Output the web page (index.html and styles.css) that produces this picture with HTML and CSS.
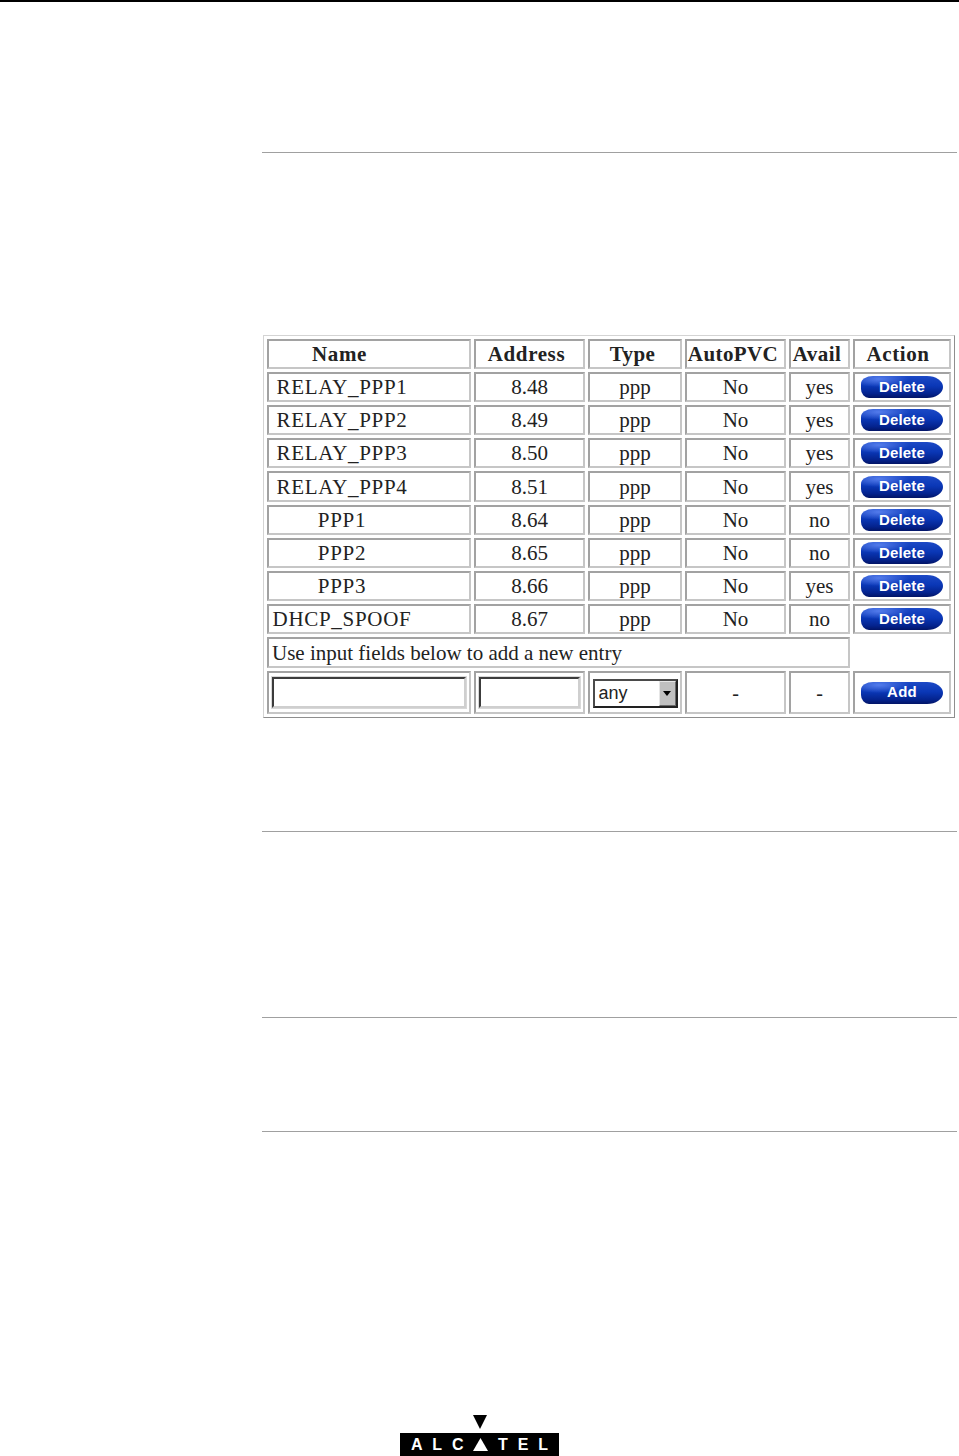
FILE: index.html
```html
<!DOCTYPE html>
<html lang="en">
<head>
<meta charset="utf-8">
<title>PVC table</title>
<link rel="stylesheet" href="styles.css">
</head>
<body>
<div class="page">
  <div class="top-rule"></div>
  <main class="content">
    <div class="rule rule-a"></div>
    <form class="panel">
      <table class="grid">
        <colgroup>
          <col class="c-name"><col class="c-addr"><col class="c-type"><col class="c-auto"><col class="c-avail"><col class="c-action">
        </colgroup>
        <thead>
          <tr><th class="h-name">Name</th><th class="h-addr">Address</th><th class="h-mid">Type</th><th class="h-mid">AutoPVC</th><th class="h-mid">Avail</th><th class="h-action">Action</th></tr>
        </thead>
        <tbody>
          <tr><td class="name">RELAY_PPP1</td><td>8.48</td><td>ppp</td><td>No</td><td>yes</td><td><button type="button" class="pill">Delete</button></td></tr>
          <tr><td class="name">RELAY_PPP2</td><td>8.49</td><td>ppp</td><td>No</td><td>yes</td><td><button type="button" class="pill">Delete</button></td></tr>
          <tr><td class="name">RELAY_PPP3</td><td>8.50</td><td>ppp</td><td>No</td><td>yes</td><td><button type="button" class="pill">Delete</button></td></tr>
          <tr class="tall"><td class="name">RELAY_PPP4</td><td>8.51</td><td>ppp</td><td>No</td><td>yes</td><td><button type="button" class="pill">Delete</button></td></tr>
          <tr><td class="name">PPP1</td><td>8.64</td><td>ppp</td><td>No</td><td>no</td><td><button type="button" class="pill">Delete</button></td></tr>
          <tr><td class="name">PPP2</td><td>8.65</td><td>ppp</td><td>No</td><td>no</td><td><button type="button" class="pill">Delete</button></td></tr>
          <tr><td class="name">PPP3</td><td>8.66</td><td>ppp</td><td>No</td><td>yes</td><td><button type="button" class="pill">Delete</button></td></tr>
          <tr><td class="name">DHCP_SPOOF</td><td>8.67</td><td>ppp</td><td>No</td><td>no</td><td><button type="button" class="pill">Delete</button></td></tr>
          <tr><td class="hint" colspan="5">Use input fields below to add a new entry</td><td class="blank"></td></tr>
          <tr class="add-row">
            <td><input class="field" type="text" aria-label="Name"></td>
            <td><input class="field" type="text" aria-label="Address"></td>
            <td><div class="select"><span class="select-value">any</span><span class="select-btn"><svg width="8" height="5" viewBox="0 0 8 5"><path d="M0 0h8L4 5z" fill="#000"/></svg></span></div></td>
            <td class="dash">-</td>
            <td class="dash">-</td>
            <td><button type="button" class="pill">Add</button></td>
          </tr>
        </tbody>
      </table>
    </form>
    <div class="rule rule-b"></div>
    <div class="rule rule-c"></div>
    <div class="rule rule-d"></div>
  </main>
  <footer class="logo">
    <svg class="logo-mark" width="14" height="14" viewBox="0 0 14 14"><path d="M0 0h14L7 14z" fill="#000"/></svg>
    <div class="logo-bar">
      <span>A</span><span>L</span><span>C</span>
      <svg class="logo-tri" width="15" height="13" viewBox="0 0 15 13"><path d="M7.500 0L15 13H0z" fill="#fff"/></svg>
      <span>T</span><span>E</span><span>L</span>
    </div>
  </footer>
</div>
</body>
</html>
```
FILE: styles.css
```css
html, body {
  margin: 0;
  padding: 0;
  background: #fff;
}
.page {
  display: flex;
  flex-direction: column;
  width: 959px;
  height: 1456px;
  overflow: hidden;
  font-family: "Liberation Serif", "Times New Roman", serif;
  color: #222;
}
.top-rule {
  height: 2px;
  background: #000;
  flex: none;
}
.content {
  margin-left: 262px;
  width: 695px;
  flex: none;
}
.rule {
  height: 1px;
  background: #a0a0a0;
}
.rule-a { margin-top: 150px; }
.rule-b { margin-top: 113px; }
.rule-c { margin-top: 185px; }
.rule-d { margin-top: 113px; }
.panel {
  margin: 182px 0 0 1px;
}
.grid {
  table-layout: fixed;
  width: 692px;
  border-collapse: separate;
  border-spacing: 3px;
  border: 1px solid;
  border-color: #d4d4d4 #8e8e8e #8e8e8e #d4d4d4;
  font-size: 21px;
}
.c-name { width: 204px; }
.c-addr { width: 111px; }
.c-type { width: 94px; }
.c-auto { width: 101px; }
.c-avail { width: 61px; }
.c-action { width: 98px; }
th, td {
  box-sizing: border-box;
  height: 30px;
  padding: 0;
  border: 2px solid;
  border-color: #a2a2a2 #c6c6c6 #c6c6c6 #a2a2a2;
  text-align: center;
  vertical-align: middle;
  white-space: nowrap;
  line-height: 26px;
}
th {
  padding-top: 1px;
  font-weight: bold;
  line-height: 25px;
  letter-spacing: .6px;
}
.h-name { padding-right: 59px; }
.h-addr { padding-right: 6px; }
.h-mid { padding-right: 5px; letter-spacing: .4px; }
.h-action { padding-right: 8px; }
.name {
  padding-right: 54px;
  letter-spacing: .7px;
}
.tall td {
  height: 31px;
}
td.hint {
  height: 31px;
  padding-left: 3px;
  text-align: left;
}
td.blank {
  border: 0;
}
.add-row td {
  height: 43px;
}
.dash {
  font-size: 20px;
  line-height: 24px;
}
.field {
  display: block;
  box-sizing: border-box;
  width: calc(100% - 6px);
  height: 31px;
  margin: 0 auto;
  padding: 0 4px;
  background: #fff;
  border: 2px solid;
  border-color: #3c3c3c #cfcfcf #cfcfcf #3c3c3c;
  border-radius: 0;
  outline: 1px solid #d8d8d8;
}
.select {
  display: flex;
  align-items: center;
  box-sizing: border-box;
  width: 85px;
  height: 29px;
  margin: 1px auto 0;
  border: 2px solid;
  border-color: #4a4a4a #222 #222 #4a4a4a;
  background: #fff;
}
.select-value {
  flex: 1;
  padding-left: 4px;
  text-align: left;
  font: 18px/25px "Liberation Sans", Arial, sans-serif;
  color: #222;
}
.select-btn {
  display: flex;
  align-items: center;
  justify-content: center;
  box-sizing: border-box;
  width: 17px;
  height: 25px;
  background: #c0c0c0;
  border: 1px solid;
  border-color: #e6e6e6 #6a6a6a #6a6a6a #e6e6e6;
}
.pill {
  display: block;
  box-sizing: border-box;
  width: 82px;
  height: 22px;
  margin: 0 auto;
  padding: 0 0 1px;
  border: 0;
  border-radius: 12px 16px 16px 8px / 8px 11px 11px 9px;
  background:
    radial-gradient(ellipse 30px 8px at 18px 3px, rgba(90, 130, 240, .9), rgba(90, 130, 240, 0)),
    linear-gradient(180deg, #1c49c6 0%, #0a37b6 45%, #04238e 80%, #021466 100%);
  color: #fff;
  font: bold 15px/20px "Liberation Sans", Arial, sans-serif;
  letter-spacing: .2px;
}
.logo {
  margin-top: auto;
  display: flex;
  flex-direction: column;
  align-items: center;
  flex: none;
}
.logo-mark {
  display: block;
  margin-bottom: 4px;
}
.logo-bar {
  display: flex;
  align-items: center;
  justify-content: space-between;
  box-sizing: border-box;
  width: 159px;
  height: 23px;
  padding: 0 11px;
  background: #000;
  color: #fff;
  font: bold 16px/23px "Liberation Sans", Arial, sans-serif;
}
.logo-tri {
  display: block;
}
```
